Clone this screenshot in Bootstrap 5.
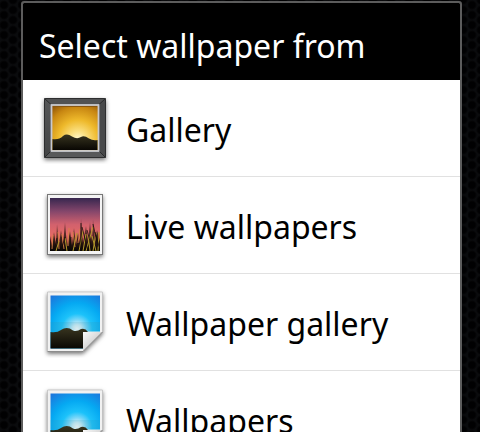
<!DOCTYPE html>
<html lang="en">
<head>
<meta charset="utf-8">
<meta name="viewport" content="width=device-width, initial-scale=1">
<title>Select wallpaper from</title>
<link href="https://cdn.jsdelivr.net/npm/bootstrap@5.3.0/dist/css/bootstrap.min.css" rel="stylesheet">
<style>
body {
  font-family: "Noto Sans", "Open Sans", sans-serif;
  background-color: #0a0b0d;
  background-image:
    radial-gradient(circle at 4px 5px, #010102 3px, transparent 5px),
    radial-gradient(circle at 13px 0, #010102 3px, transparent 5px),
    radial-gradient(circle at 13px 10px, #010102 3px, transparent 5px);
  background-size: 18px 10px;
}
.screen { padding: 1px 18px 0 21px; }
.dialog { border: 2px solid #5c5c5c; border-radius: 3px; }
.dialog-title { font-size: 32px; line-height: 44px; padding: 21px 16px 12px; }
.source {
  --bs-list-group-border-color: #e1e1e1;
  --bs-list-group-color: #000;
  --bs-list-group-action-color: #000;
  font-size: 32px;
  line-height: 48px;
  height: 97px;
  padding: 0 16px;
  gap: 15px;
}
.source-name { padding-top: 3px; }
.source-icon { width: 72px; height: 72px; }
.thumb-shadow { filter: drop-shadow(0 2px 2px rgba(0, 0, 0, .55)); }
</style>
</head>
<body>
<svg width="0" height="0" class="position-absolute" aria-hidden="true">
  <defs>
    <radialGradient id="gold" gradientUnits="userSpaceOnUse" cx="39" cy="48" r="42">
      <stop offset="0" stop-color="#fffbd8"/><stop offset=".2" stop-color="#fbe184"/>
      <stop offset=".48" stop-color="#eeb92b"/><stop offset=".78" stop-color="#c88712"/><stop offset="1" stop-color="#8c5208"/>
    </radialGradient>
    <linearGradient id="frame" x1="0" y1="0" x2="0" y2="1">
      <stop offset="0" stop-color="#555657"/><stop offset="1" stop-color="#424344"/>
    </linearGradient>
    <linearGradient id="dusk" x1="0" y1="0" x2="0" y2="1">
      <stop offset="0" stop-color="#37274f"/><stop offset=".25" stop-color="#84466b"/>
      <stop offset=".5" stop-color="#d2616d"/><stop offset=".7" stop-color="#e46a65"/><stop offset="1" stop-color="#a5482c"/>
    </linearGradient>
    <linearGradient id="reed" gradientUnits="userSpaceOnUse" x1="0" y1="28" x2="0" y2="62">
      <stop offset="0" stop-color="#73343f" stop-opacity=".6"/><stop offset=".5" stop-color="#3c1e1a" stop-opacity=".85"/><stop offset="1" stop-color="#050403"/>
    </linearGradient>
    <radialGradient id="sky" gradientUnits="userSpaceOnUse" cx="38" cy="43" r="45">
      <stop offset="0" stop-color="#fff"/><stop offset=".1" stop-color="#d2f1fb"/><stop offset=".2" stop-color="#7fd8f8"/>
      <stop offset=".34" stop-color="#1cc2fa"/><stop offset=".58" stop-color="#05a9f2"/><stop offset="1" stop-color="#2269d6"/>
    </radialGradient>
    <linearGradient id="hill" x1="0" y1="0" x2="0" y2="1">
      <stop offset="0" stop-color="#37341f"/><stop offset="1" stop-color="#090703"/>
    </linearGradient>
    <linearGradient id="curl" x1="0" y1="0" x2=".7" y2=".7">
      <stop offset="0" stop-color="#fafafa"/><stop offset=".65" stop-color="#dcdcdc"/><stop offset="1" stop-color="#aaa"/>
    </linearGradient>
    <symbol id="paper" viewBox="0 0 72 72">
      <path class="thumb-shadow" d="M8.500 6H63.500V46L44 65.500H8.500Z" fill="#f1f1f1" stroke="#bdbdbd" stroke-width=".7"/>
      <path d="M8.500 65.500H44" stroke="#8c8c8c"/>
      <path d="M11.500 9.500H61V45.500H44V62.500H11.500Z" fill="url(#sky)"/>
      <path d="M11.500 36H61V45.500H11.500Z" fill="#3b8fa4" opacity=".18"/>
      <path d="M11.500 46Q18 47 22 44Q28 40 34 44.500Q38 46 42 43Q46 41.500 49 46H44V62.500H11.500Z" fill="url(#hill)"/>
      <path d="M44 46H63L44 65Z" fill="url(#curl)"/>
      <path d="M63.500 46L44 65.500" stroke="#858585" stroke-width="1"/>
    </symbol>
  </defs>
</svg>

<main class="screen vh-100 overflow-hidden">
  <section class="dialog bg-white overflow-hidden" aria-labelledby="dialog-title">
    <h1 id="dialog-title" class="dialog-title bg-black text-white fw-normal m-0">Select wallpaper from</h1>
    <div class="list-group list-group-flush">
      <button type="button" class="source list-group-item list-group-item-action d-flex align-items-center">
        <svg class="source-icon flex-shrink-0" viewBox="0 0 72 72" aria-hidden="true">
          <rect class="thumb-shadow" x="5" y="6" width="62" height="60" rx="1.500" fill="url(#frame)"/>
          <path d="M5.500 6.500H66.500L60 12.500H12Z" fill="#515253"/>
          <path d="M66.500 6.500V65.500L60 59V12.500Z" fill="#48494a"/>
          <path d="M5.500 65.500H66.500L60 59H12Z" fill="#58595a"/>
          <path d="M5.500 6.500L12 12.500M66.500 6.500L60 12.500M5.500 65.500L12 59M66.500 65.500L60 59" stroke="#202122" stroke-width=".8"/>
          <rect x="5.500" y="6.500" width="61" height="59" rx="1" fill="none" stroke="#2d2e2f"/>
          <rect x="12.500" y="13" width="47" height="46" fill="url(#gold)" stroke="#c8c9cf" stroke-width="1.800"/>
          <path d="M14 14.500H58" stroke="#895711"/>
          <path d="M13.500 47Q20 48 24 44Q28 41 33 44.500Q38 47.500 42 45Q45 43 50 46.500Q54 49 58.500 48V58H13.500Z" fill="url(#hill)"/>
        </svg>
        <span class="source-name">Gallery</span>
      </button>
      <button type="button" class="source list-group-item list-group-item-action d-flex align-items-center">
        <svg class="source-icon flex-shrink-0" viewBox="0 0 72 72" aria-hidden="true">
          <rect class="thumb-shadow" x="8.500" y="5.500" width="55" height="60" fill="#f4f4f4" stroke="#777" stroke-width="1"/>
          <rect x="11" y="9" width="50" height="53" fill="url(#dusk)"/>
          <path fill="url(#reed)" d="M11 62V47L13 57L15 43L17 57L18 35L20 56L22 41L24 56L26 33L28 57L31 42L33 56L35 39L37 56L39 44L41 54L42 29L44 54L47 37L49 52L51 33L53 52L54 30L56 52L58 41L61 52V62Z"/>
          <path fill="none" stroke="#d98146" stroke-width=".9" d="M13 60L14 46M20 60L19 43M25 60L23 45M29 57L30 39M36 58L34 43M39 54L41 40"/>
          <path fill="none" stroke="#b49a2a" stroke-width="1" d="M17 62L20 52M28 62L26 49M34 62L38 44M40 62L44 42M44 62L47 45M47 62L54 38M51 62L49 46M54 62L57 44M57 62L53 47M59 62L60 43"/>
          <path fill="none" stroke="#110d08" stroke-width=".8" d="M15 62L18 49M22 62L26 48M31 62L32 48M42 62L42 34M49 62L43 38M53 60L48 41M59 58L54 35M60 57L56 43"/>
        </svg>
        <span class="source-name">Live wallpapers</span>
      </button>
      <button type="button" class="source list-group-item list-group-item-action d-flex align-items-center">
        <svg class="source-icon flex-shrink-0" aria-hidden="true"><use href="#paper"/></svg>
        <span class="source-name">Wallpaper gallery</span>
      </button>
      <button type="button" class="source list-group-item list-group-item-action d-flex align-items-center">
        <svg class="source-icon flex-shrink-0" aria-hidden="true"><use href="#paper"/></svg>
        <span class="source-name">Wallpapers</span>
      </button>
    </div>
  </section>
</main>
<script src="https://cdn.jsdelivr.net/npm/bootstrap@5.3.0/dist/js/bootstrap.bundle.min.js"></script>
</body>
</html>
